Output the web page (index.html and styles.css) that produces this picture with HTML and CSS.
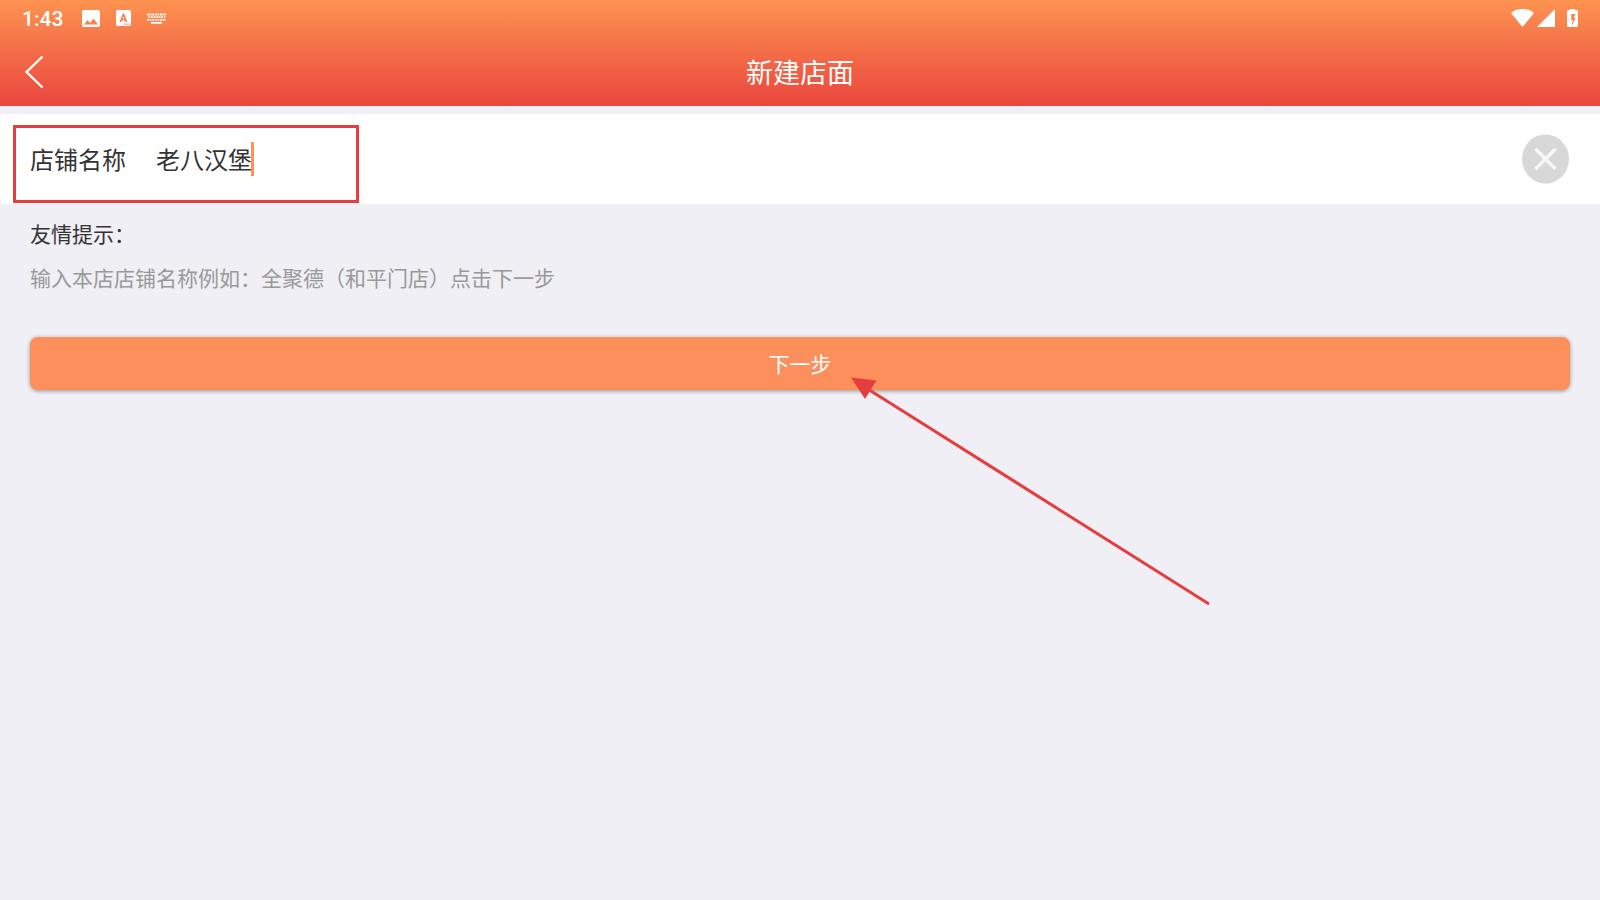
FILE: index.html
```html
<!DOCTYPE html>
<html lang="zh-CN">

<head>
  <meta charset="utf-8">
  <meta name="viewport" content="width=device-width, initial-scale=1">
  <title>新建店面</title>
  <link rel="stylesheet" href="styles.css">
</head>

<body>
  <header class="header">
    <div class="status">
      <span class="time">1:43</span>
      <svg class="icon-image" width="18" height="18" viewBox="0 0 18 18">
        <path fill="#fff" fill-rule="evenodd" d="M2 0h14a2 2 0 0 1 2 2v13a2 2 0 0 1-2 2H2a2 2 0 0 1-2-2V2a2 2 0 0 1 2-2zM2 14.500h14l-4.500-6-3.500 4.500-2.500-3z"/>
      </svg>
      <svg class="icon-lang" width="15" height="18" viewBox="0 0 15 18">
        <path fill="#fff" d="M1.500 0h12A1.500 1.500 0 0 1 15 1.500v13a1.500 1.500 0 0 1-1.500 1.500h-12A1.500 1.500 0 0 1 0 14.500v-13A1.500 1.500 0 0 1 1.500 0z"/>
        <path fill="none" stroke="#f48150" stroke-width="1.800" d="M4.400 12L7.500 4.500 10.600 12M5.300 9.600h4.400"/>
        <path fill="none" stroke="#f48150" stroke-width="1.300" stroke-dasharray="1.300 1" d="M8 14.200h6"/>
      </svg>
      <svg class="icon-keyboard" width="19" height="18" viewBox="0 0 19 18">
        <g fill="none" stroke="#fff" stroke-width="1.800">
          <path stroke-dasharray="1.800 .8" d="M0 4.500h19"/>
          <path stroke-dasharray="1.800 .8" d="M1.300 7.200h17"/>
          <path stroke-dasharray="1.800 .8" d="M0 9.900h19"/>
          <path d="M4 12.800h11"/>
        </g>
      </svg>
      <span class="spacer"></span>
      <svg width="23" height="20" viewBox="0 0 23 20">
        <path fill="#fff" d="M0 4C6-1.500 17-1.500 23 4L11.500 18z"/>
      </svg>
      <svg class="icon-signal" width="18" height="20" viewBox="0 0 18 20">
        <path fill="#fff" d="M18 0v18H0z"/>
      </svg>
      <svg class="icon-battery" width="11" height="20" viewBox="0 0 11 20">
        <path fill="#fff" fill-rule="evenodd" d="M3 0h5v1h2l1 1v15l-1 1H1l-1-1V2l1-1h2zM4.200 5v6h1.600l-1.300 6L8.800 9H6.800L8.500 5z"/>
      </svg>
    </div>
    <div class="navbar">
      <button class="back" type="button" aria-label="返回">
        <svg width="20" height="34" viewBox="0 0 20 34">
          <path fill="none" stroke="#fff" stroke-width="2.400" d="M18.500 1.500L2.500 17l16 15.500"/>
        </svg>
      </button>
      <h1 class="title">新建店面</h1>
    </div>
  </header>

  <form>
    <div class="row">
      <label for="shopName">店铺名称</label>
      <div class="field">
        <input type="text" id="shopName" value="老八汉堡" size="4">
        <span class="caret"></span>
      </div>
      <button class="clear" type="reset" aria-label="清除">
        <svg width="48" height="50" viewBox="0 0 48 50">
          <ellipse cx="23.500" cy="25" rx="23.500" ry="24.500" fill="#d8d8d8"/>
          <path fill="none" stroke="#f7f7f7" stroke-width="3.400" d="M13.500 15l20 20M33.500 15l-20 20"/>
        </svg>
      </button>
      <div class="mark"></div>
    </div>

    <div class="tips">
      <p class="tips-title">友情提示：</p>
      <p class="tips-text">输入本店店铺名称例如：全聚德（和平门店）点击下一步</p>
    </div>

    <div class="submit">
      <button class="next" type="submit">下一步</button>
      <svg class="arrow" width="360" height="230" viewBox="0 0 360 230">
        <path fill="none" stroke="#e53e3e" stroke-width="3" d="M16 11.500L358 227"/>
        <path fill="#e53e3e" d="M0 .5L25.500 3.500 14 22z"/>
      </svg>
    </div>
  </form>
</body>

</html>
```

FILE: styles.css
```css
* {
  box-sizing: border-box;
}

body {
  display: flex;
  flex-direction: column;
  min-height: 100vh;
  margin: 0;
  background: #f0eff5;
  color: #333;
  font-family: "Noto Sans CJK SC", sans-serif;
}

form {
  flex: 1;
}

button {
  padding: 0;
  border: 0;
  background: none;
  font-family: inherit;
}

svg {
  display: block;
}

.header {
  background: linear-gradient(#fd9351, #ea463d);
  color: #fff;
}

.status {
  display: flex;
  align-items: center;
  height: 38px;
  padding: 0 22px;
}

.time {
  font: 500 21px/36px Roboto, sans-serif;
}

.icon-image {
  margin-left: 19px;
}

.icon-lang {
  margin-left: 16px;
}

.icon-keyboard {
  margin-left: 16px;
}

.spacer {
  flex: 1;
}

.icon-signal {
  margin-left: 3px;
}

.icon-battery {
  margin-left: 12px;
}

.navbar {
  display: grid;
  grid-template-columns: 1fr auto 1fr;
  align-items: center;
  height: 68px;
  padding: 0 24px;
}

.back {
  justify-self: start;
}

.title {
  margin: 0;
  font-size: 27px;
  font-weight: 400;
  line-height: 38px;
}

.row {
  position: relative;
  display: flex;
  align-items: center;
  height: 90px;
  margin-top: 8px;
  padding: 0 30px;
  background: #fff;
  font-size: 24px;
  line-height: 34px;
}

.field {
  display: flex;
  flex: 1;
  align-items: center;
  margin-left: 30px;
}

.field input {
  width: 4em;
  height: 34px;
  padding: 0;
  border: 0;
  outline: 0;
  background: none;
  color: inherit;
  font: inherit;
}

.caret {
  width: 3px;
  height: 34px;
  margin-left: -1px;
  background: #fd9351;
}

/* highlight box around the name field */
.mark {
  position: absolute;
  top: 11px;
  left: 13px;
  width: 346px;
  height: 78px;
  border: 3px solid #e53e3e;
  pointer-events: none;
}

.tips {
  padding: 7px 30px 0;
  font-size: 21px;
  line-height: 44px;
}

.tips p {
  margin: 0;
}

.tips-text {
  color: #999;
}

.submit {
  position: relative;
  padding: 38px 30px 0;
}

.next {
  display: block;
  width: 100%;
  height: 53px;
  padding-bottom: 2px;
  border-radius: 8px;
  background: #fd8f5c;
  box-shadow: 0 1px 4px rgba(0, 0, 0, .4);
  color: #fff;
  font-size: 21px;
}

.arrow {
  position: absolute;
  top: 78px;
  left: calc(50% + 51px);
  pointer-events: none;
}
```
